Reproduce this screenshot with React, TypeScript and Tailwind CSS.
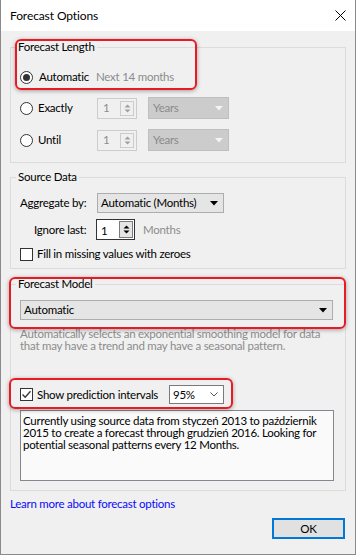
import React from "react";

function Radio({ checked }: { checked?: boolean }) {
  return (
    <span className="flex h-[13px] w-[13px] shrink-0 items-center justify-center rounded-full border border-[#333333] bg-white">
      {checked && <span className="h-[7px] w-[7px] rounded-full bg-[#333333]" />}
    </span>
  );
}

function Check({ checked }: { checked?: boolean }) {
  return (
    <span className="flex h-[13px] w-[13px] shrink-0 items-center justify-center border border-[#333333] bg-white">
      {checked && (
        <svg width="11" height="11" viewBox="0 0 11 11">
          <path d="M1.5 5.5 L4.2 8.3 L9.5 2.2" fill="none" stroke="#333333" strokeWidth="1.3" />
        </svg>
      )}
    </span>
  );
}

function Arrows({ color }: { color: string }) {
  return (
    <svg width="7" height="11" viewBox="0 0 7 11">
      <polygon points="3.5,1.5 0.5,4.5 6.5,4.5" fill={color} />
      <polygon points="3.5,9.5 0.5,6.5 6.5,6.5" fill={color} />
    </svg>
  );
}

function Spin({ disabled }: { disabled?: boolean }) {
  if (disabled) {
    return (
      <div className="flex h-[21px] w-[40px] shrink-0 items-center border border-[#cccccc] bg-[#f0f0f0]">
        <span className="flex-1 pl-[5px] text-[#8c8c8c]">1</span>
        <div className="mr-[2px] flex h-[15px] w-[14px] items-center justify-center border border-[#cccccc] bg-[#f0f0f0]">
          <Arrows color="#a0a0a0" />
        </div>
      </div>
    );
  }
  return (
    <div className="flex h-[21px] w-[39px] shrink-0 items-center border border-[#333333] bg-white">
      <span className="flex-1 pl-[4px] pt-[2px] text-black">1</span>
      <div className="mr-[1px] flex h-[17px] w-[14px] items-center justify-center border border-[#7a7a7a] bg-[#e5e5e5]">
        <Arrows color="#000000" />
      </div>
    </div>
  );
}

function Years() {
  return (
    <div className="flex h-[22px] w-[81px] shrink-0 items-center justify-between border border-[#bfbfbf] bg-[#cccccc] pl-[4px] pr-[5px] text-[#8a8a8a]">
      <span>Years</span>
      <svg width="8" height="5" viewBox="0 0 8 5">
        <polygon points="0,0 8,0 4,4.5" fill="#f4f4f4" />
      </svg>
    </div>
  );
}

function Combo({ text, width }: { text: string; width: string }) {
  return (
    <div className={`flex h-[20px] ${width} shrink-0 items-center justify-between border border-[#adadad] bg-[#e5e5e5] pl-[3px] pr-[5px] text-black`}>
      <span>{text}</span>
      <svg width="8" height="5" viewBox="0 0 8 5">
        <polygon points="0,0 8,0 4,4.5" fill="#000000" />
      </svg>
    </div>
  );
}

export default function App() {
  return (
    <div className="relative flex h-[555px] w-[356px] flex-col border-x border-b border-[#8a8a8a] bg-[#f0f0f0] font-['Lato','Liberation_Sans',sans-serif] text-[11.5px] leading-[16px] tracking-[-0.25px] text-black">
      {/* title bar */}
      <div className="flex h-[31px] shrink-0 items-center justify-between bg-white pl-[9px] pr-[9px]">
        <span className="text-[12px] tracking-[-0.1px]">Forecast Options</span>
        <svg width="11" height="11" viewBox="0 0 11 11">
          <path d="M0.5 0.5 L10.5 10.5 M10.5 0.5 L0.5 10.5" stroke="#000000" strokeWidth="1" />
        </svg>
      </div>

      <div className="flex flex-col px-[9px]">
        {/* Forecast Length */}
        <fieldset className="mt-[8px] border border-[#dcdcdc] px-[5px] pb-[11px]">
          <legend className="px-[2px] leading-[16px]">Forecast Length</legend>
          <div className="flex flex-col pl-[4px]">
            <div className="mt-[11px] flex h-[22px] items-center">
              <div className="flex w-[76px] items-center gap-[6px]">
                <Radio checked />
                <span>Automatic</span>
              </div>
              <span className="text-[#8c8c8c]">Next 14 months</span>
            </div>
            <div className="mt-[9px] flex h-[22px] items-center">
              <div className="flex w-[77px] items-center gap-[5px]">
                <Radio />
                <span>Exactly</span>
              </div>
              <Spin disabled />
              <div className="ml-[11px]">
                <Years />
              </div>
            </div>
            <div className="mt-[10px] flex h-[22px] items-center">
              <div className="flex w-[77px] items-center gap-[5px]">
                <Radio />
                <span>Until</span>
              </div>
              <Spin disabled />
              <div className="ml-[11px]">
                <Years />
              </div>
            </div>
          </div>
        </fieldset>

        {/* Source Data */}
        <fieldset className="mt-[6px] border border-[#dcdcdc] px-[5px] pb-[6px]">
          <legend className="px-[2px] leading-[16px]">Source Data</legend>
          <div className="flex flex-col pl-[4px]">
            <div className="mt-[8px] flex h-[20px] items-center">
              <span className="w-[77px] whitespace-nowrap">Aggregate by:</span>
              <Combo text="Automatic (Months)" width="w-[127px]" />
            </div>
            <div className="mt-[6px] flex h-[21px] items-center">
              <span className="w-[76px] whitespace-nowrap pl-[14px]">Ignore last:</span>
              <Spin />
              <span className="ml-[8px] text-[#8c8c8c]">Months</span>
            </div>
            <div className="mt-[6px] flex h-[16px] items-center gap-[4px]">
              <Check />
              <span>Fill in missing values with zeroes</span>
            </div>
          </div>
        </fieldset>

        {/* Forecast Model */}
        <fieldset className="mt-[7px] border border-[#dcdcdc] px-[5px] pb-[9px]">
          <legend className="px-[2px] leading-[16px]">Forecast Model</legend>
          <div className="flex flex-col pl-[4px]">
            <div className="mt-[8px]">
              <Combo text="Automatic" width="w-[313px]" />
            </div>
            <p className="mt-[8px] whitespace-nowrap leading-[12px] text-[#8c8c8c]">
              Automatically selects an exponential smoothing model for data
              <br />
              that may have a trend and may have a seasonal pattern.
            </p>
            <div className="mt-[33px] flex h-[19px] items-center">
              <div className="flex w-[149px] items-center gap-[4px] whitespace-nowrap">
                <Check checked />
                <span>Show prediction intervals</span>
              </div>
              <div className="flex h-[19px] w-[55px] items-center justify-between border border-[#7a7a7a] bg-white pl-[3px] pr-[5px]">
                <span>95%</span>
                <svg width="8" height="5" viewBox="0 0 8 5">
                  <path d="M0.5 0.5 L4 4 L7.5 0.5" fill="none" stroke="#555555" strokeWidth="1" />
                </svg>
              </div>
            </div>
            <div className="mt-[6px] h-[71px] w-[314px] border border-[#828790] bg-[#fafafa] px-[2px] pt-[4px] leading-[12px]">
              Currently using source data from styczeń 2013 to październik 2015 to create a forecast through grudzień 2016. Looking for potential seasonal patterns every 12 Months.
            </div>
          </div>
        </fieldset>

        <a className="mt-[5px] self-start text-[#0a0aff]">Learn more about forecast options</a>

        <div className="mt-[6px] flex justify-end pr-[1px]">
          <button className="flex h-[21px] w-[73px] items-center justify-center border-2 border-[#0078d7] bg-[#e1e1e1]">
            OK
          </button>
        </div>
      </div>

      {/* annotation highlights */}
      <div className="pointer-events-none absolute left-[14px] top-[39px] h-[51px] w-[182px] rounded-[6px] border-2 border-[#ea1a22] shadow-[0_1px_4px_rgba(0,0,0,0.35)]" />
      <div className="pointer-events-none absolute left-[8px] top-[277px] h-[52px] w-[337px] rounded-[6px] border-2 border-[#ea1a22] shadow-[0_1px_4px_rgba(0,0,0,0.35)]" />
      <div className="pointer-events-none absolute left-[8px] top-[378px] h-[31px] w-[224px] rounded-[6px] border-2 border-[#ea1a22] shadow-[0_1px_4px_rgba(0,0,0,0.35)]" />
    </div>
  );
}
